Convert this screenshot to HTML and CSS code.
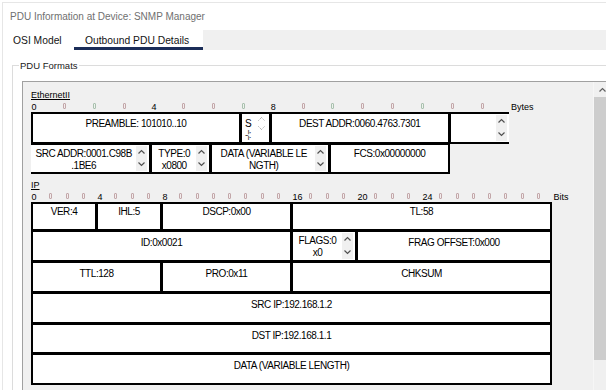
FILE: index.html
```html
<!DOCTYPE html>
<html>
<head>
<meta charset="utf-8">
<title>PDU Information</title>
<link rel="stylesheet" href="styles.css">
</head>
<body>
<div class="window">
  <div class="title">PDU Information at Device: SNMP Manager</div>
  <div class="tabs">
    <div class="tab">OSI Model</div>
    <div class="tab active">Outbound PDU Details</div>
    <div class="tab-fill"></div>
  </div>
  <div class="tab-body">
    <fieldset class="group">
      <legend>PDU Formats</legend>
      <div class="panel">
        <div class="content">

          <section class="pdu eth">
            <div class="sec-title">EthernetII</div>
            <div class="ruler">
              <span class="n">0</span><i class="t"></i><i class="t g"></i><i class="t"></i>
              <span class="n">4</span><i class="t"></i><i class="t"></i><i class="t g"></i>
              <span class="n">8</span><i class="t"></i><i class="t g"></i><i class="t"></i><i class="t"></i><i class="t g"></i><i class="t"></i><i class="t"></i>
              <span class="unit">Bytes</span>
            </div>
            <div class="grid">
              <div class="cell span-7"><div class="txt">PREAMBLE: 101010..10</div></div>
              <div class="cell span-1 sfd">
                <div class="txt left">S<br><span class="cut">-¦:</span></div>
                <div class="spin dim">
                  <svg width="7" height="5" viewBox="0 0 7 5"><path d="M0.5 4.5 L3.5 1.5 L6.5 4.5" fill="none" stroke="#8a8a8a" stroke-width="1" stroke-dasharray="1 1"/></svg>
                  <svg width="7" height="5" viewBox="0 0 7 5"><path d="M0.5 0.5 L3.5 3.5 L6.5 0.5" fill="none" stroke="#8a8a8a" stroke-width="1" stroke-dasharray="1 1"/></svg>
                </div>
              </div>
              <div class="cell span-6"><div class="txt">DEST ADDR:0060.4763.7301</div></div>
              <div class="cell span-2 open-right">
                <div class="txt"></div>
                <div class="spin">
                  <svg width="7" height="5" viewBox="0 0 7 5"><path d="M0.5 4.5 L3.5 1.5 L6.5 4.5" fill="none" stroke="#505050" stroke-width="1.2"/></svg>
                  <svg width="7" height="5" viewBox="0 0 7 5"><path d="M0.5 0.5 L3.5 3.5 L6.5 0.5" fill="none" stroke="#505050" stroke-width="1.2"/></svg>
                </div>
              </div>

              <div class="cell span-4 r2 open-left">
                <div class="txt">SRC ADDR:0001.C98B<br>.1BE6</div>
                <div class="spin">
                  <svg width="7" height="5" viewBox="0 0 7 5"><path d="M0.5 4.5 L3.5 1.5 L6.5 4.5" fill="none" stroke="#505050" stroke-width="1.2"/></svg>
                  <svg width="7" height="5" viewBox="0 0 7 5"><path d="M0.5 0.5 L3.5 3.5 L6.5 0.5" fill="none" stroke="#505050" stroke-width="1.2"/></svg>
                </div>
              </div>
              <div class="cell span-2 r2">
                <div class="txt">TYPE:0<br>x0800</div>
                <div class="spin">
                  <svg width="7" height="5" viewBox="0 0 7 5"><path d="M0.5 4.5 L3.5 1.5 L6.5 4.5" fill="none" stroke="#505050" stroke-width="1.2"/></svg>
                  <svg width="7" height="5" viewBox="0 0 7 5"><path d="M0.5 0.5 L3.5 3.5 L6.5 0.5" fill="none" stroke="#505050" stroke-width="1.2"/></svg>
                </div>
              </div>
              <div class="cell span-4 r2">
                <div class="txt">DATA (VARIABLE LE<br>NGTH)</div>
                <div class="spin">
                  <svg width="7" height="5" viewBox="0 0 7 5"><path d="M0.5 4.5 L3.5 1.5 L6.5 4.5" fill="none" stroke="#505050" stroke-width="1.2"/></svg>
                  <svg width="7" height="5" viewBox="0 0 7 5"><path d="M0.5 0.5 L3.5 3.5 L6.5 0.5" fill="none" stroke="#505050" stroke-width="1.2"/></svg>
                </div>
              </div>
              <div class="cell span-4 r2"><div class="txt">FCS:0x00000000</div></div>
            </div>
          </section>

          <section class="pdu ip">
            <div class="sec-title">IP</div>
            <div class="ruler">
              <span class="n">0</span><i class="t"></i><i class="t"></i><i class="t"></i>
              <span class="n">4</span><i class="t"></i><i class="t"></i><i class="t"></i>
              <span class="n">8</span><i class="t"></i><i class="t"></i><i class="t"></i><i class="t"></i><i class="t"></i><i class="t"></i><i class="t"></i>
              <span class="n">16</span><i class="t"></i><i class="t"></i><i class="t"></i>
              <span class="n">20</span><i class="t"></i><i class="t"></i><i class="t"></i>
              <span class="n">24</span><i class="t"></i><i class="t"></i><i class="t"></i><i class="t"></i><i class="t"></i><i class="t"></i><i class="t"></i>
              <span class="unit">Bits</span>
            </div>
            <div class="grid">
              <div class="cell span-4 top"><div class="txt">VER:4</div></div>
              <div class="cell span-4 top"><div class="txt">IHL:5</div></div>
              <div class="cell span-8 top"><div class="txt">DSCP:0x00</div></div>
              <div class="cell span-16 top"><div class="txt">TL:58</div></div>

              <div class="cell span-16"><div class="txt">ID:0x0021</div></div>
              <div class="cell span-4">
                <div class="txt two">FLAGS:0<br>x0</div>
                <div class="spin">
                  <svg width="7" height="5" viewBox="0 0 7 5"><path d="M0.5 4.5 L3.5 1.5 L6.5 4.5" fill="none" stroke="#505050" stroke-width="1.2"/></svg>
                  <svg width="7" height="5" viewBox="0 0 7 5"><path d="M0.5 0.5 L3.5 3.5 L6.5 0.5" fill="none" stroke="#505050" stroke-width="1.2"/></svg>
                </div>
              </div>
              <div class="cell span-12"><div class="txt">FRAG OFFSET:0x000</div></div>

              <div class="cell span-8"><div class="txt">TTL:128</div></div>
              <div class="cell span-8"><div class="txt">PRO:0x11</div></div>
              <div class="cell span-16"><div class="txt">CHKSUM</div></div>

              <div class="cell span-32"><div class="txt">SRC IP:192.168.1.2</div></div>
              <div class="cell span-32"><div class="txt">DST IP:192.168.1.1</div></div>
              <div class="cell span-32"><div class="txt">DATA (VARIABLE LENGTH)</div></div>
            </div>
          </section>

        </div>
        <div class="scrollbar">
          <div class="sb-btn">
            <svg width="7" height="5" viewBox="0 0 7 5"><path d="M0.5 4.5 L3.5 1.5 L6.5 4.5" fill="none" stroke="#606060" stroke-width="1.2"/></svg>
          </div>
          <div class="sb-thumb"></div>
        </div>
      </div>
    </fieldset>
  </div>
</div>
</body>
</html>
```

FILE: styles.css
```css
* { box-sizing: border-box; }

html, body {
  margin: 0;
  padding: 0;
  background: #ffffff;
}

body {
  width: 606px;
  height: 390px;
  overflow: hidden;
  font-family: "Liberation Sans", Arial, sans-serif;
  color: #000;
}

.window {
  margin: 2px 0 0 2px;
  width: 640px;
  height: 400px;
  border-top: 1px solid #e6e6e6;
  border-left: 1px solid #e6e6e6;
  background: #fff;
}

.title {
  height: 27px;
  padding-left: 7px;
  line-height: 27px;
  font-size: 10px;
  color: #707070;
  white-space: nowrap;
}

.tabs {
  display: flex;
  height: 20px;
}

.tab {
  height: 20px;
  padding-top: 2px;
  line-height: 18px;
  font-size: 10.3px;
  color: #141414;
  white-space: nowrap;
  background: #fff;
}

.tab:first-child {
  width: 71px;
  padding-left: 10px;
}

.tab.active {
  width: 129px;
  padding-left: 11px;
  border-bottom: 3px solid #1b2d58;
}

.tab-fill {
  flex: 1;
  background: #f0f0f0;
}

.tab-body {
  background: #fff;
}

.group {
  margin: 9.5px 0 0 9px;
  padding: 0;
  width: 630px;
  min-inline-size: 0;
  border: 1px solid #dcdcdc;
  border-right: 0;
  border-bottom: 0;
}

.group legend {
  margin-left: 6px;
  padding: 0 1px;
  font-size: 9.5px;
  line-height: 11px;
  color: #1a1a1a;
}

.panel {
  display: flex;
  margin: 10.5px 0 0 9px;
  height: 320px;
  background: #f0f0f0;
  border-top: 1px solid #a0a0a0;
  border-left: 1px solid #a0a0a0;
}

.content {
  flex: none;
  width: 570px;
  padding: 8px 0 0 8px;
}

.sec-title {
  height: 10px;
  font-size: 9px;
  line-height: 10px;
  text-decoration: underline;
  margin-bottom: 2px;
}

.ruler {
  display: grid;
  height: 10px;
  font-size: 9px;
  line-height: 10px;
  white-space: nowrap;
}

.eth .ruler {
  grid-template-columns: repeat(16, 29.85px) auto;
}

.ip {
  margin-top: 7.2px;
}

.ip .ruler {
  grid-template-columns: repeat(32, 16.25px) auto;
}

.ruler .n {
  margin-left: 1px;
}

.ip .ruler .n {
  margin-left: 1.5px;
}

.ruler .n:first-child {
  margin-left: 0.5px;
}

.ruler .t {
  display: block;
  width: 3px;
  height: 6px;
  margin: 1px 0 0 2px;
  border: 1px solid #c2a7a9;
  border-radius: 1px;
  background: #f3eded;
}

.ruler .t.g {
  border-color: #a9c0ae;
  background: #edf3ee;
}

.ruler .unit {
  margin-left: 2.5px;
}

.grid {
  display: grid;
}

.eth .grid {
  grid-template-columns: repeat(16, 29.85px);
  grid-template-rows: 30.8px 30px;
}

.ip .grid {
  grid-template-columns: repeat(32, 16.25px);
  grid-template-rows: 28.3px repeat(5, 30.75px);
}

.cell {
  display: flex;
  min-width: 0;
  overflow: hidden;
  margin: 0 -1px -1px 0;
  background: #fff;
  border: 2px solid #000;
  font-size: 10px;
  line-height: 12px;
  letter-spacing: -0.45px;
}

.cell.open-right {
  border-right: 0;
  margin-right: 0;
}

.cell.open-left {
  border-left: 0;
}

.span-1 { grid-column: span 1; }
.span-2 { grid-column: span 2; }
.span-4 { grid-column: span 4; }
.span-6 { grid-column: span 6; }
.span-7 { grid-column: span 7; }
.span-8 { grid-column: span 8; }
.span-12 { grid-column: span 12; }
.span-16 { grid-column: span 16; }
.span-32 { grid-column: span 32; }

.txt {
  flex: 1;
  min-width: 0;
  text-align: center;
  white-space: nowrap;
  padding-top: 5.2px;
}

.eth .txt {
  padding-top: 3.7px;
}

.eth .r2 .txt {
  padding-top: 2.9px;
}

.cell.top .txt {
  padding-top: 2px;
}

.txt.two {
  padding-top: 2.5px;
}

.txt.left {
  text-align: left;
  padding-left: 3px;
  line-height: 11px;
}

.txt .cut {
  color: #444;
  letter-spacing: -1px;
}

.spin {
  flex: none;
  width: 11px;
  margin: 1px 2px 1px 0;
  padding: 3px 0 4px;
  background: #f0f0f0;
  display: flex;
  flex-direction: column;
  justify-content: space-between;
  align-items: center;
}

.spin svg {
  display: block;
}

.spin.dim {
  background: transparent;
  width: 9px;
  height: 16px;
  margin-right: 3px;
  padding: 1px 0 0;
}

.scrollbar {
  flex: none;
  width: 17px;
  background: #f0f0f0;
  border-left: 1px solid #f6f6f6;
}

.sb-btn {
  height: 15px;
  display: flex;
  justify-content: center;
  padding-top: 5px;
}

.sb-btn svg {
  display: block;
}

.sb-thumb {
  height: 263px;
  background: #cdcdcd;
}
```
